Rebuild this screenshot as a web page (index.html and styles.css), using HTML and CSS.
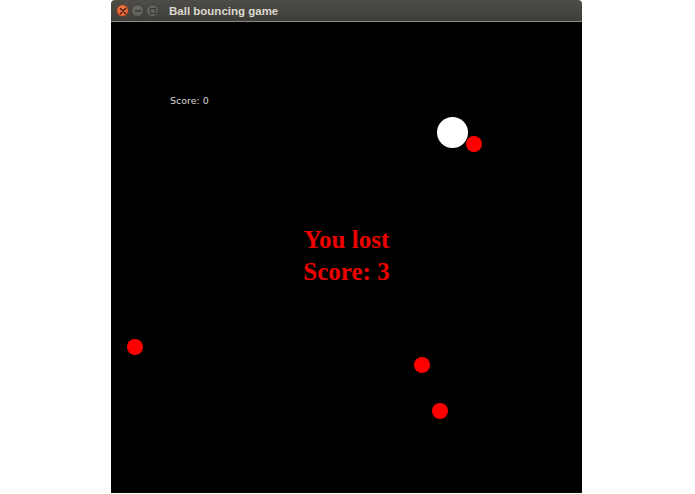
FILE: index.html
```html
<!DOCTYPE html>
<html>
<head>
<meta charset="utf-8">
<link rel="stylesheet" href="styles.css">
</head>
<body>
<div class="window">
  <div class="titlebar">
    <div class="btns">
      <span class="btn close">
        <svg width="8" height="8" viewBox="0 0 8 8"><path d="M1.5 1.5L6.5 6.5M6.5 1.5L1.5 6.5" stroke="#3a1a0c" stroke-width="1.4" stroke-linecap="round"/></svg>
      </span>
      <span class="btn">
        <svg width="8" height="8" viewBox="0 0 8 8"><path d="M1.5 4H6.5" stroke="#3a3935" stroke-width="1.4" stroke-linecap="round"/></svg>
      </span>
      <span class="btn">
        <svg width="8" height="8" viewBox="0 0 8 8"><rect x="1.5" y="1.5" width="5" height="5" fill="none" stroke="#3a3935" stroke-width="1.2"/></svg>
      </span>
    </div>
    <div class="title">Ball bouncing game</div>
  </div>
  <div class="canvas">
    <div class="score">Score: 0</div>
    <div class="ball white" style="left:326px;top:95px"></div>
    <div class="ball red" style="left:355px;top:114px"></div>
    <div class="ball red" style="left:16px;top:317px"></div>
    <div class="ball red" style="left:303px;top:335px"></div>
    <div class="ball red" style="left:321px;top:381px"></div>
    <div class="lost">
      <div>You lost</div>
      <div>Score: 3</div>
    </div>
  </div>
</div>
</body>
</html>
```
FILE: styles.css
```css
html, body {
  margin: 0;
  padding: 0;
  background: #ffffff;
}
body {
  width: 695px;
  height: 494px;
  overflow: hidden;
}
.window {
  margin-left: 111px;
  width: 471px;
  display: flex;
  flex-direction: column;
}
.titlebar {
  height: 21px;
  background: linear-gradient(#4e4c46, #3f3e3a);
  border-radius: 4px 4px 0 0;
  border-bottom: 1px solid #8a8883;
  display: flex;
  align-items: center;
  padding-left: 5px;
}
.btns {
  display: flex;
  gap: 2px;
}
.btn {
  width: 13px;
  height: 13px;
  border-radius: 50%;
  background: #66645e;
  display: flex;
  align-items: center;
  justify-content: center;
  box-shadow: inset 0 0 0 1px #3b3a36;
}
.btn.close {
  background: radial-gradient(circle at 50% 40%, #f47d4e, #df4a1e);
}
.title {
  margin-left: 10px;
  font-family: "Liberation Sans", Arial, sans-serif;
  font-weight: bold;
  font-size: 11.5px;
  color: #dcd8cf;
}
.canvas {
  position: relative;
  height: 471px;
  background: #000000;
  display: flex;
  align-items: center;
  justify-content: center;
}
.score {
  position: absolute;
  left: 59px;
  top: 73px;
  font-family: "DejaVu Sans", sans-serif;
  font-size: 9.5px;
  color: #d8d8d8;
}
.ball {
  position: absolute;
  border-radius: 50%;
}
.ball.white {
  width: 31px;
  height: 31px;
  background: #ffffff;
}
.ball.red {
  width: 16px;
  height: 16px;
  background: #ff0000;
}
.lost {
  font-family: "Liberation Serif", "Times New Roman", serif;
  font-weight: bold;
  font-size: 25px;
  line-height: 32px;
  color: #ee0000;
  text-align: center;
  margin-top: -4px;
}
```
